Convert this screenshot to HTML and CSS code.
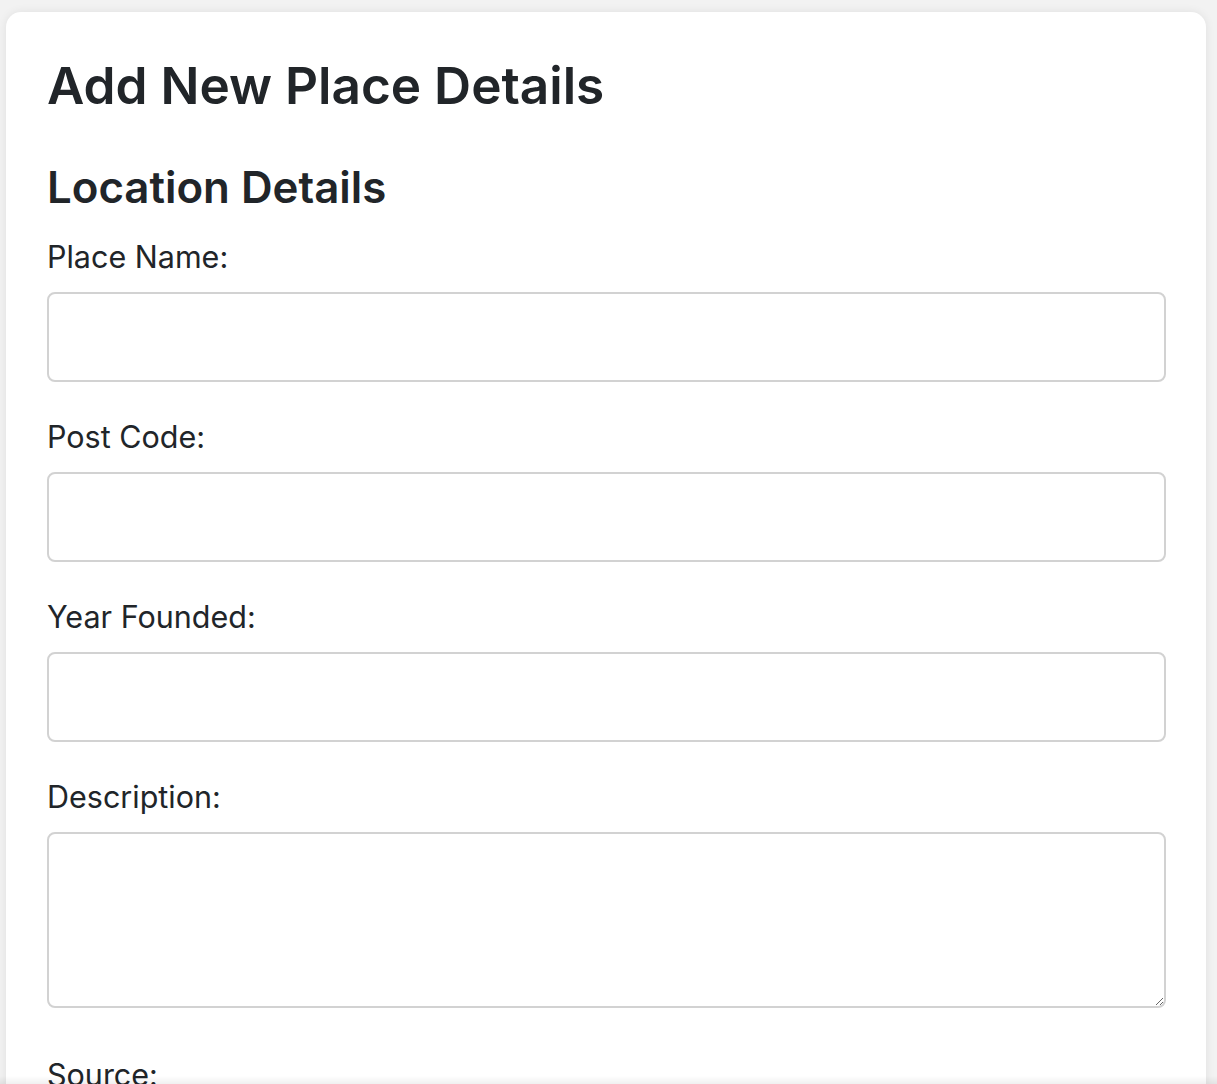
FILE: index.html
```html
<!DOCTYPE html>
<html lang="en">
<head>
<meta charset="utf-8">
<title>Add New Place Details</title>
<link rel="stylesheet" href="styles.css">
</head>
<body>
<div class="card">
  <h1 class="title">Add New Place Details</h1>
  <form class="form">
    <h2 class="section">Location Details</h2>
    <div class="field">
      <label class="label" for="name">Place Name:</label>
      <input class="input" id="name" type="text">
    </div>
    <div class="field">
      <label class="label" for="post">Post Code:</label>
      <input class="input" id="post" type="text">
    </div>
    <div class="field">
      <label class="label" for="year">Year Founded:</label>
      <input class="input" id="year" type="text">
    </div>
    <div class="field field-area">
      <label class="label" for="desc">Description:</label>
      <textarea class="input textarea" id="desc"></textarea>
    </div>
    <div class="field">
      <label class="label" for="source">Source:</label>
      <input class="input" id="source" type="text">
    </div>
  </form>
</div>
<div class="bottom-shade"></div>
</body>
</html>
```

FILE: styles.css
```css
html, body {
  margin: 0;
  padding: 0;
}
body {
  background: #f2f2f2;
  font-family: Inter, "Noto Sans", sans-serif;
  color: #212529;
  padding: 12px 11px 0 6px;
}
.card {
  background: #fff;
  border-radius: 15px;
  box-shadow: 0 0 10px rgba(0, 0, 0, 0.08);
  padding: 43px 40px 40px 41px;
}
.title {
  margin: 0 0 45px;
  font-size: 51.3px;
  font-weight: 600;
  line-height: 1.2;
}
.section {
  margin: 0 0 22px;
  font-size: 43.8px;
  font-weight: 600;
  line-height: 1.2;
}
.field {
  margin-bottom: 34px;
}
.field-area {
  margin-bottom: 46px;
}
.label {
  display: block;
  font-size: 30.5px;
  line-height: 42px;
  margin-bottom: 14px;
}
.input {
  display: block;
  box-sizing: border-box;
  width: 100%;
  height: 90px;
  border: 2px solid #d2d2d2;
  border-radius: 8px;
  background: #fff;
  font: inherit;
  margin: 0;
}
.textarea {
  height: 176px;
  resize: vertical;
}
.bottom-shade {
  position: fixed;
  left: 0;
  right: 0;
  bottom: 0;
  height: 8px;
  background: linear-gradient(to bottom, rgba(0,0,0,0), rgba(0,0,0,0.06));
}
```
